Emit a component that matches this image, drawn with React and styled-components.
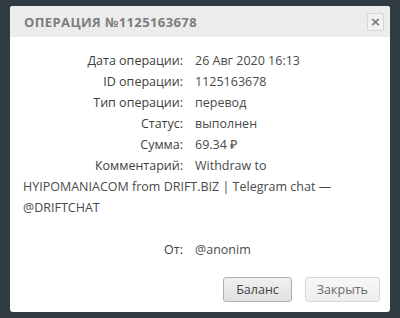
import React from "react";
import styled, { createGlobalStyle } from "styled-components";

const GlobalStyle = createGlobalStyle`
  html, body {
    margin: 0;
    padding: 0;
    background: #2f3b41;
  }
  body {
    font-family: "Open Sans", "Liberation Sans", sans-serif;
  }
`;

const Page = styled.div`
  width: 400px;
  height: 318px;
  padding: 6px 10px 0;
  box-sizing: border-box;
`;

const Modal = styled.div`
  background: #fff;
  border-radius: 3px;
  overflow: hidden;
  height: 306px;
  display: flex;
  flex-direction: column;
`;

const Header = styled.div`
  height: 31px;
  background: #ececec;
  display: flex;
  align-items: center;
  justify-content: space-between;
  padding: 0 6px 0 14px;
`;

const Title = styled.h3`
  margin: 0;
  font-size: 13px;
  font-weight: 700;
  letter-spacing: 0.4px;
  color: #7d7d7d;
  text-transform: uppercase;
`;

const CloseButton = styled.button`
  width: 17px;
  height: 18px;
  padding: 0;
  border: 1px solid #d6d6d6;
  border-radius: 2px;
  background: #f1f1f1;
  color: #777;
  font-size: 13px;
  font-weight: 700;
  line-height: 14px;
  font-family: "DejaVu Sans", sans-serif;
`;

const Body = styled.div`
  flex: 1;
  padding: 13px 30px 0 13px;
  font-size: 12.5px;
  line-height: 21px;
  color: #4a4a4a;
`;

const Row = styled.div`
  margin-top: ${(p) => (p.$gap ? "21px" : "0")};
`;

const Label = styled.span`
  display: inline-block;
  width: 160px;
  margin-right: 12px;
  text-align: right;
  color: #3e3e3e;
`;

const Value = styled.span`
  color: #4a4a4a;
`;

const Footer = styled.div`
  display: flex;
  justify-content: flex-end;
  gap: 13px;
  padding: 0 10px 10px;
`;

const Button = styled.button`
  height: 25px;
  padding: 0 ${(p) => (p.$primary ? "12px" : "11px")};
  border: 1px solid ${(p) => (p.$primary ? "#b0b0b0" : "#d8d8d8")};
  border-radius: 3px;
  background: ${(p) =>
    p.$primary
      ? "linear-gradient(#f0f0f0, #e0e0e0)"
      : "linear-gradient(#f7f7f7, #eeeeee)"};
  color: ${(p) => (p.$primary ? "#444" : "#6a6a6a")};
  font-family: "Open Sans", "Liberation Sans", sans-serif;
  font-size: 12.5px;
`;

const rows = [
  ["Дата операции:", "26 Авг 2020 16:13"],
  ["ID операции:", "1125163678"],
  ["Тип операции:", "перевод"],
  ["Статус:", "выполнен"],
  ["Сумма:", "69.34 ₽"],
  ["Комментарий:", "Withdraw to HYIPOMANIACOM from DRIFT.BIZ | Telegram chat — @DRIFTCHAT"],
];

const App = () => {
  return (
    <>
      <GlobalStyle />
      <Page>
        <Modal>
          <Header>
            <Title>Операция №1125163678</Title>
            <CloseButton>×</CloseButton>
          </Header>
          <Body>
            {rows.map(([label, value]) => (
              <Row key={label}>
                <Label>{label}</Label>
                <Value>{value}</Value>
              </Row>
            ))}
            <Row $gap>
              <Label>От:</Label>
              <Value>@anonim</Value>
            </Row>
          </Body>
          <Footer>
            <Button $primary>Баланс</Button>
            <Button>Закрыть</Button>
          </Footer>
        </Modal>
      </Page>
    </>
  );
};

export default App;
